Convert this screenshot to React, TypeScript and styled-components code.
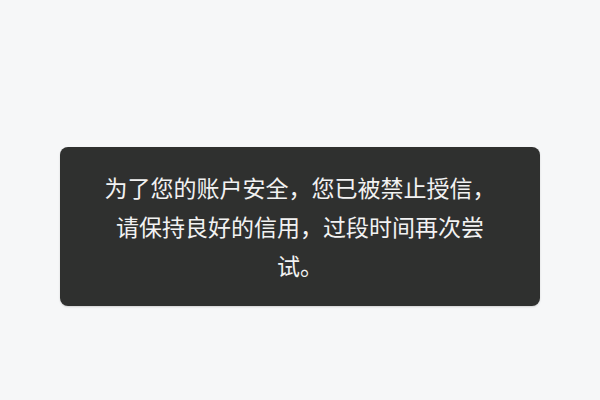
import React from 'react'
import styled, { createGlobalStyle } from 'styled-components'

const GlobalStyle = createGlobalStyle`
  html, body {
    margin: 0;
    padding: 0;
    background: #f6f7f8;
  }
`;

const Page = styled.div`
  width: 600px;
  height: 400px;
  box-sizing: border-box;
  padding-top: 147px;
  background: #f6f7f8;
  font-family: "Noto Sans CJK SC", "Noto Sans", sans-serif;
`;

const Toast = styled.div`
  width: 480px;
  margin: 0 auto;
  box-sizing: border-box;
  padding: 21px 40px;
  background: #2f302f;
  border-radius: 8px;
  box-shadow: 0 1px 2px rgba(0, 0, 0, 0.15);
  color: #f2f2f2;
  font-size: 23px;
  line-height: 39px;
  text-align: center;
`;

const App = () => {
  return (
    <Page>
      <GlobalStyle />
      <Toast>为了您的账户安全，您已被禁止授信，请保持良好的信用，过段时间再次尝试。</Toast>
    </Page>
  )
}

export default App
